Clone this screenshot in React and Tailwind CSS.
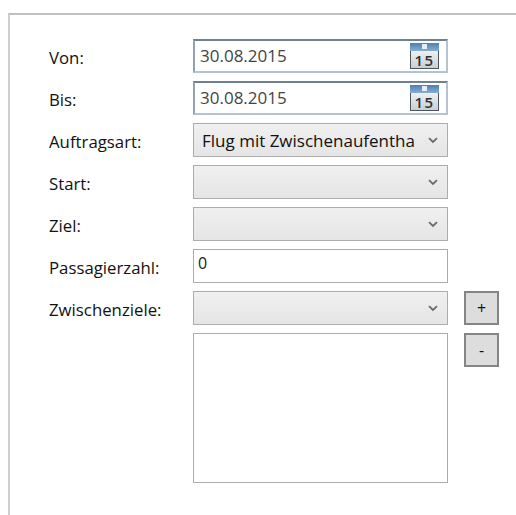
import { useState } from "react";

const font = "font-['Open_Sans','Noto_Sans',sans-serif]";

function CalendarIcon() {
  return (
    <svg width="30" height="26" viewBox="0 0 30 26" className="block overflow-visible">
      <defs>
        <linearGradient id="calBody" x1="0" y1="0" x2="0" y2="1">
          <stop offset="0" stopColor="#ffffff" />
          <stop offset="1" stopColor="#c9cdd1" />
        </linearGradient>
        <linearGradient id="calTop" x1="0" y1="0" x2="0" y2="1">
          <stop offset="0" stopColor="#4f7fae" />
          <stop offset="1" stopColor="#86aed4" />
        </linearGradient>
      </defs>
      <rect x="0.5" y="0.5" width="28" height="25" fill="url(#calBody)" stroke="#4a5560" />
      <rect x="0" y="0" width="29" height="8" fill="url(#calTop)" />
      <rect x="12" y="1" width="5" height="5" fill="#e4eef7" />
      <text
        x="14.5"
        y="22.5"
        textAnchor="middle"
        fontSize="15"
        fontWeight="600"
        fill="#26313b"
        fontFamily="Open Sans, sans-serif"
        letterSpacing="1.5"
      >
        15
      </text>
    </svg>
  );
}

function Chevron() {
  return (
    <svg width="10" height="7" viewBox="0 0 10 7" className="block">
      <path d="M1 1.2 L5 5 L9 1.2" fill="none" stroke="#6a6a6a" strokeWidth="1.8" />
    </svg>
  );
}

function DateField({ value }) {
  return (
    <div className="flex h-[34px] items-center justify-between border-2 border-t-[#6d8196] border-l-[#8ea3b5] border-r-[#b4c3cf] border-b-[#b4c3cf] bg-white pl-[5px] pr-[6px]">
      <span className="-mt-[2px] text-[17px] leading-none text-[#444]">{value}</span>
      <CalendarIcon />
    </div>
  );
}

function Select({ value }) {
  return (
    <div className="flex h-[34px] items-center justify-between border border-[#acacac] bg-gradient-to-b from-[#f0f0f0] to-[#e5e5e5] pl-2 pr-[9px]">
      <span className="whitespace-nowrap text-[17px] leading-none text-[#111]">{value}</span>
      <Chevron />
    </div>
  );
}

function Label({ children }) {
  return <div className="flex h-[34px] items-center pt-[4px] text-[16.8px] leading-none text-[#111]">{children}</div>;
}

function SmallButton({ children }) {
  return (
    <button className="flex h-[34px] w-[35px] items-center justify-center border-2 border-[#858585] bg-[#dddddd] text-[16px] leading-none text-[#111]">
      {children}
    </button>
  );
}

export default function App() {
  const [from] = useState("30.08.2015");

  return (
    <div className={`h-[515px] w-[516px] overflow-hidden bg-white pl-2 pt-[13px] ${font}`}>
      <div className="h-full border-l-2 border-t-2 border-l-[#cfcfcf] border-t-[#c0c0c0] pl-[39px] pt-[24px]">
        <div className="grid grid-cols-[144px_255px_16px_35px] gap-y-2">
          <Label>Von:</Label>
          <DateField value={from} />
          <div className="col-span-2" />

          <Label>Bis:</Label>
          <DateField value={from} />
          <div className="col-span-2" />

          <Label>Auftragsart:</Label>
          <Select value="Flug mit Zwischenaufentha" />
          <div className="col-span-2" />

          <Label>Start:</Label>
          <Select value="" />
          <div className="col-span-2" />

          <Label>Ziel:</Label>
          <Select value="" />
          <div className="col-span-2" />

          <Label>Passagierzahl:</Label>
          <div className="h-[34px] border border-[#acacac] bg-white pl-1 pt-[3px] text-[16px] leading-[20px] text-[#1a1a1a]">0</div>
          <div className="col-span-2" />

          <Label>Zwischenziele:</Label>
          <Select value="" />
          <div />
          <SmallButton>+</SmallButton>

          <div />
          <div className="h-[150px] border border-[#acacac] bg-white" />
          <div />
          <SmallButton>-</SmallButton>
        </div>
      </div>
    </div>
  );
}
